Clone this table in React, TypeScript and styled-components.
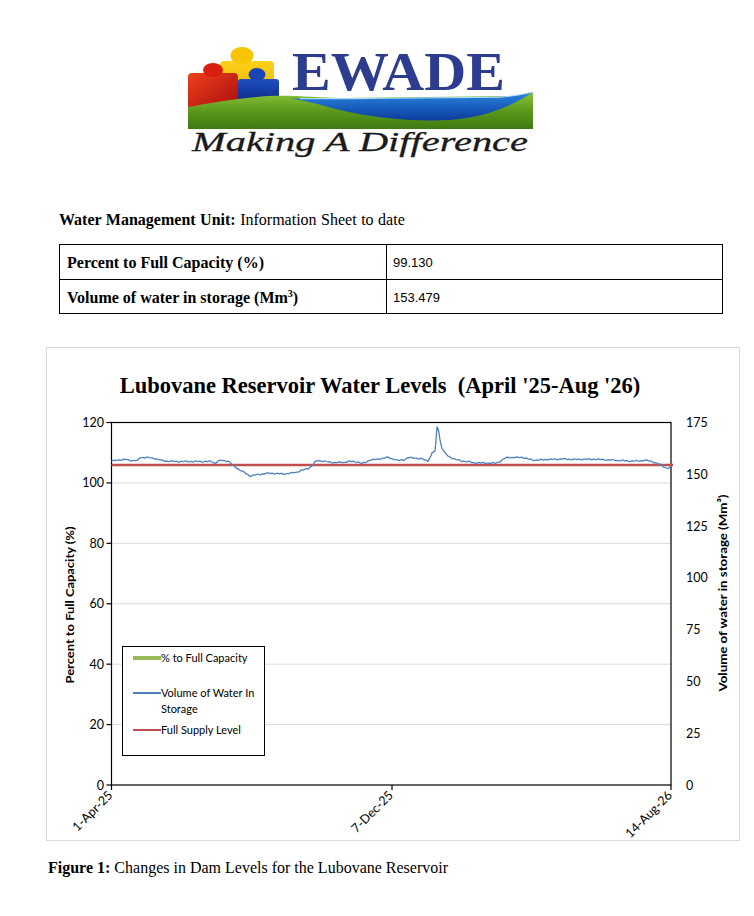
import styled, { createGlobalStyle } from 'styled-components';

const GlobalStyle = createGlobalStyle`
  html, body {
    margin: 0;
    padding: 0;
    background: #fff;
  }
  body {
    font-family: "Liberation Serif", "Times New Roman", serif;
    color: #000;
  }
`;

// plot area, in page pixels (the chart svg uses a page-coord viewBox)
const PLOT = { left: 111.5, right: 671, top: 422.5, bottom: 785 };
const yLeft = (v: number) => PLOT.bottom - (v / 120) * (PLOT.bottom - PLOT.top);
const yRight = (v: number) => PLOT.bottom - (v / 175) * (PLOT.bottom - PLOT.top);

const LEFT_TICKS = [0, 20, 40, 60, 80, 100, 120];
const RIGHT_TICKS = [0, 25, 50, 75, 100, 125, 150, 175];
const X_TICKS = [
  { x: 111.5, label: '1-Apr-25' },
  { x: 392, label: '7-Dec-25' },
  { x: 671, label: '14-Aug-26' },
];

const FULL_SUPPLY_Y = 465;

// volume trace, traced off the original chart
const VOLUME: [number, number][] = [
  [111.5, 461], [118, 460], [125, 459.5], [132, 460.5], [138, 460.5], [140, 457.5],
  [148, 457.5], [155, 458.5], [160, 460], [165, 461], [175, 461.5], [188, 461.5],
  [200, 461.5], [212, 461.5], [215, 463.5], [218, 461], [222, 460.5], [228, 461],
  [231, 463.5], [235, 467], [240, 470], [245, 473], [250, 476], [255, 475],
  [262, 474], [268, 473.3], [275, 473.5], [285, 474], [292, 473], [297, 472],
  [303, 470], [308, 468.5], [312, 466], [315, 462], [318, 460.5], [323, 461],
  [328, 462], [335, 462.5], [345, 462.3], [348, 461.5], [352, 461.5], [358, 462],
  [362, 463.5], [365, 462.5], [370, 460], [375, 459.5], [382, 458.5], [388, 457.3],
  [393, 459], [398, 460.5], [405, 459.5], [408, 457.7], [415, 458], [422, 459],
  [428, 460.7], [431, 456], [432, 452.7], [435, 451.7], [436, 440], [437, 426.7],
  [438, 428], [439, 433], [440, 440], [442, 448.3], [445, 453], [448, 456],
  [452, 458], [455, 459.3], [462, 461], [470, 462], [475, 462.7], [485, 463],
  [495, 463.3], [500, 461.5], [505, 458.3], [508, 457.3], [515, 457.5], [522, 457.3],
  [528, 459], [535, 460.3], [545, 459.5], [555, 459.2], [562, 459], [575, 459.5],
  [585, 459.2], [595, 459.3], [610, 460], [620, 460.5], [628, 461], [638, 461],
  [645, 460.3], [652, 461.5], [655, 462.7], [660, 464.5], [662, 465.7], [665, 467.5],
  [668, 468.3], [670, 467.5], [671.5, 466.7],
];

function tracePath(pts: [number, number][]) {
  const out: string[] = [];
  for (let i = 0; i < pts.length - 1; i++) {
    const [x0, y0] = pts[i];
    const [x1, y1] = pts[i + 1];
    const steps = Math.max(1, Math.round((x1 - x0) / 1.5));
    for (let s = 0; s < steps; s++) {
      const t = s / steps;
      const x = x0 + (x1 - x0) * t;
      const wobble = Math.sin(x * 1.31) * 0.4 + Math.sin(x * 0.53 + 1) * 0.3;
      out.push(`${x.toFixed(1)},${(y0 + (y1 - y0) * t + wobble).toFixed(1)}`);
    }
  }
  const last = pts[pts.length - 1];
  out.push(`${last[0]},${last[1]}`);
  return 'M' + out.join(' L');
}

export default function App() {
  return (
    <>
      <GlobalStyle />
      <Page>
        <LogoRow>
          <Logo />
        </LogoRow>

        <SheetHeading>
          <strong>Water Management Unit:</strong> Information Sheet to date
        </SheetHeading>

        <InfoTable>
          <tbody>
            <tr>
              <LabelCell $h={35}>Percent to Full Capacity (%)</LabelCell>
              <ValueCell>99.130</ValueCell>
            </tr>
            <tr>
              <LabelCell $h={34}>
                Volume of water in storage (Mm<sup>3</sup>)
              </LabelCell>
              <ValueCell>153.479</ValueCell>
            </tr>
          </tbody>
        </InfoTable>

        <ChartFrame>
          <ChartTitle>Lubovane Reservoir Water Levels&nbsp; (April '25-Aug '26)</ChartTitle>
          <DamChart />
          <Legend>
            <LegendItem $top={3}>
              <Swatch $color="#9bbb59" $weight={3.5} />
              <LegendText>% to Full Capacity</LegendText>
            </LegendItem>
            <LegendItem $top={19}>
              <Swatch $color="#4f81bd" $weight={1.2} />
              <LegendText>Volume of Water In Storage</LegendText>
            </LegendItem>
            <LegendItem $top={5}>
              <Swatch $color="#c0504d" $weight={2.5} />
              <LegendText>Full Supply Level</LegendText>
            </LegendItem>
          </Legend>
        </ChartFrame>

        <Caption>
          <strong>Figure 1:</strong> Changes in Dam Levels for the Lubovane Reservoir
        </Caption>
      </Page>
    </>
  );
}

function Logo() {
  return (
    <LogoSvg width="345" height="112" viewBox="188 47 345 112">
      <defs>
        <linearGradient id="redBody" x1="0" y1="0" x2="1" y2="1">
          <stop offset="0" stopColor="#f0401c" />
          <stop offset="1" stopColor="#a80d0d" />
        </linearGradient>
        <linearGradient id="yellowBody" x1="0" y1="0" x2="0" y2="1">
          <stop offset="0" stopColor="#ffd21a" />
          <stop offset="1" stopColor="#e6b000" />
        </linearGradient>
        <linearGradient id="blueBody" x1="0" y1="0" x2="0" y2="1">
          <stop offset="0" stopColor="#1f4fc0" />
          <stop offset="1" stopColor="#0d2a8a" />
        </linearGradient>
        <linearGradient id="hill" x1="0" y1="0" x2="0" y2="1">
          <stop offset="0" stopColor="#8cc43a" />
          <stop offset="0.5" stopColor="#5c9a1c" />
          <stop offset="1" stopColor="#3e7a10" />
        </linearGradient>
        <linearGradient id="water" x1="0" y1="0" x2="0" y2="1">
          <stop offset="0" stopColor="#2a86e0" />
          <stop offset="1" stopColor="#0b3c9e" />
        </linearGradient>
      </defs>

      {/* people blocks */}
      <path d="M220,65 Q220,61 224,61 L270,61 Q274,61 274,65 L274,96 L220,96 Z" fill="url(#yellowBody)" />
      <ellipse cx="242" cy="55.5" rx="11.5" ry="8.5" fill="#f7c600" />
      <path d="M188,77 Q188,73 192,73 L234,73 Q238,73 238,77 L238,108 L188,108 Z" fill="url(#redBody)" />
      <ellipse cx="213" cy="70" rx="10" ry="7" fill="#d9200f" />
      <path d="M238,82 Q238,79 241,79 L276,79 Q279,79 279,82 L279,102 L238,102 Z" fill="url(#blueBody)" />
      <ellipse cx="257" cy="74.5" rx="8.5" ry="6.5" fill="#1a45b5" />

      {/* hill and water */}
      <path d="M188,107 C210,103 240,98 268,96 C295,95 320,98 340,98 L520,96 L533,92 L533,129 L188,129 Z" fill="url(#hill)" />
      <path
        d="M290,98.5 C330,99 360,98 400,98 L500,97 C515,96 525,94 533,92 C515,104 490,117 450,120 C410,122 370,117 340,110 C320,105 305,100 290,98.5 Z"
        fill="url(#water)"
      />
      <path d="M300,98.6 C340,99 380,98 420,98 L500,97.2 C515,96.2 525,94 533,92" stroke="#a8dcff" strokeWidth="1.2" fill="none" />

      <text
        x="292"
        y="90"
        fontFamily='"Liberation Serif", "Times New Roman", serif'
        fontWeight="700"
        fontSize="55"
        fill="#2d3c8e"
        textLength="213"
        lengthAdjust="spacingAndGlyphs"
      >
        EWADE
      </text>
      <text
        x="192"
        y="151"
        fontFamily='"Liberation Serif", "Times New Roman", serif'
        fontStyle="italic"
        fontSize="28"
        fill="#1a1a1a"
        stroke="#1a1a1a"
        strokeWidth="0.3"
        textLength="336"
        lengthAdjust="spacingAndGlyphs"
      >
        Making A Difference
      </text>
    </LogoSvg>
  );
}

function DamChart() {
  const gridY = [20, 40, 60, 80, 100].map(yLeft);
  return (
    <ChartSvg width="692" height="441" viewBox="47 398 692 441">
      {gridY.map((y) => (
        <line key={y} x1={PLOT.left} x2={PLOT.right} y1={y} y2={y} stroke="#d9d9d9" strokeWidth="1" />
      ))}

      {/* plot frame */}
      <rect
        x={PLOT.left}
        y={PLOT.top}
        width={PLOT.right - PLOT.left}
        height={PLOT.bottom - PLOT.top}
        fill="none"
        stroke="#000"
        strokeWidth="1.2"
      />

      {LEFT_TICKS.map((v) => (
        <g key={`l${v}`}>
          <line x1={PLOT.left - 5} x2={PLOT.left} y1={yLeft(v)} y2={yLeft(v)} stroke="#000" strokeWidth="1.2" />
          <AxisText x={104} y={yLeft(v) + 4.5} textAnchor="end">
            {v}
          </AxisText>
        </g>
      ))}

      {RIGHT_TICKS.map((v) => (
        <AxisText key={`r${v}`} x={686} y={yRight(v) + 4.5}>
          {v}
        </AxisText>
      ))}

      {X_TICKS.map((t) => (
        <g key={t.label}>
          <line x1={t.x} x2={t.x} y1={PLOT.bottom} y2={PLOT.bottom + 5} stroke="#000" strokeWidth="1.2" />
          <AxisText
            x={t.x + 2}
            y={PLOT.bottom + 11}
            textAnchor="end"
            fontSize="11"
            transform={`rotate(-45 ${t.x + 2} ${PLOT.bottom + 11})`}
          >
            {t.label}
          </AxisText>
        </g>
      ))}

      <AxisTitle x={74} y={605} textAnchor="middle" transform="rotate(-90 74 605)" textLength="157" lengthAdjust="spacingAndGlyphs">
        Percent to Full Capacity (%)
      </AxisTitle>
      <AxisTitle x={727} y={593} textAnchor="middle" transform="rotate(-90 727 593)" textLength="197" lengthAdjust="spacingAndGlyphs">
        Volume of water in storage (Mm³)
      </AxisTitle>

      <line x1={PLOT.left} x2={PLOT.right + 2} y1={FULL_SUPPLY_Y} y2={FULL_SUPPLY_Y} stroke="#c0504d" strokeWidth="2.6" />
      <path d={tracePath(VOLUME)} fill="none" stroke="#4f81bd" strokeWidth="1.3" strokeLinejoin="round" />
    </ChartSvg>
  );
}

const Page = styled.div`
  width: 754px;
  min-height: 916px;
  display: flex;
  flex-direction: column;
  padding-top: 47px;
  box-sizing: border-box;
`;

const LogoRow = styled.div`
  display: flex;
  padding-left: 188px;
  height: 112px;
`;

const LogoSvg = styled.svg`
  display: block;
  overflow: visible;
`;

const SheetHeading = styled.p`
  margin: 52px 0 0 59px;
  font-size: 16px;
  line-height: 18px;
  word-spacing: 0.5px;

  strong {
    font-weight: 700;
  }
`;

const InfoTable = styled.table`
  margin: 15px 0 0 59px;
  width: 664px;
  border-collapse: collapse;
  table-layout: fixed;

  td {
    border: 1px solid #000;
    padding: 2px 0 0;
    vertical-align: middle;
  }
`;

const LabelCell = styled.td<{ $h: number }>`
  width: 319px;
  height: ${({ $h }) => $h - 3}px;
  padding-left: 7px !important;
  font-size: 16px;
  font-weight: 700;
  line-height: 18px;

  sup {
    font-size: 10px;
    line-height: 0;
    vertical-align: 6px;
  }
`;

const ValueCell = styled.td`
  padding-left: 6px !important;
  font-family: "Liberation Sans", Arial, sans-serif;
  font-size: 13px;
  line-height: 16px;
`;

const ChartFrame = styled.section`
  position: relative;
  margin: 33px 0 0 46px;
  width: 694px;
  height: 494px;
  box-sizing: border-box;
  border: 1px solid #d9d9d9;
  display: flex;
  flex-direction: column;
`;

const ChartTitle = styled.h2`
  margin: 0;
  padding: 25px 26px 0 0;
  height: 50px;
  box-sizing: border-box;
  text-align: center;
  font-family: "Liberation Serif", "Times New Roman", serif;
  font-size: 22.5px;
  line-height: 25px;
  font-weight: 700;
  white-space: nowrap;
`;

const ChartSvg = styled.svg`
  display: block;
  flex: none;
  overflow: visible;
`;

const AxisText = styled.text`
  font-family: Lato, "Liberation Sans", sans-serif;
  font-size: 12.5px;
  fill: #000;
`;

const AxisTitle = styled.text`
  font-family: Lato, "Liberation Sans", sans-serif;
  font-size: 12px;
  font-weight: 700;
  fill: #000;
`;

const Legend = styled.div`
  position: absolute;
  left: 75px;
  top: 298px;
  width: 143px;
  height: 110px;
  box-sizing: border-box;
  border: 1px solid #000;
  background: #fff;
  display: flex;
  flex-direction: column;
`;

const LegendItem = styled.div<{ $top: number }>`
  display: flex;
  align-items: flex-start;
  margin-top: ${({ $top }) => $top}px;
  padding-left: 10px;
`;

const Swatch = styled.span<{ $color: string; $weight: number }>`
  flex: none;
  width: 28px;
  height: ${({ $weight }) => $weight}px;
  margin-top: ${({ $weight }) => 8 - $weight / 2}px;
  background: ${({ $color }) => $color};
`;

const LegendText = styled.span`
  width: 98px;
  font-family: Lato, "Liberation Sans", sans-serif;
  font-size: 11px;
  line-height: 16px;
  color: #000;
`;

const Caption = styled.p`
  margin: 18px 0 0 48px;
  font-size: 16px;
  line-height: 18px;
`;
